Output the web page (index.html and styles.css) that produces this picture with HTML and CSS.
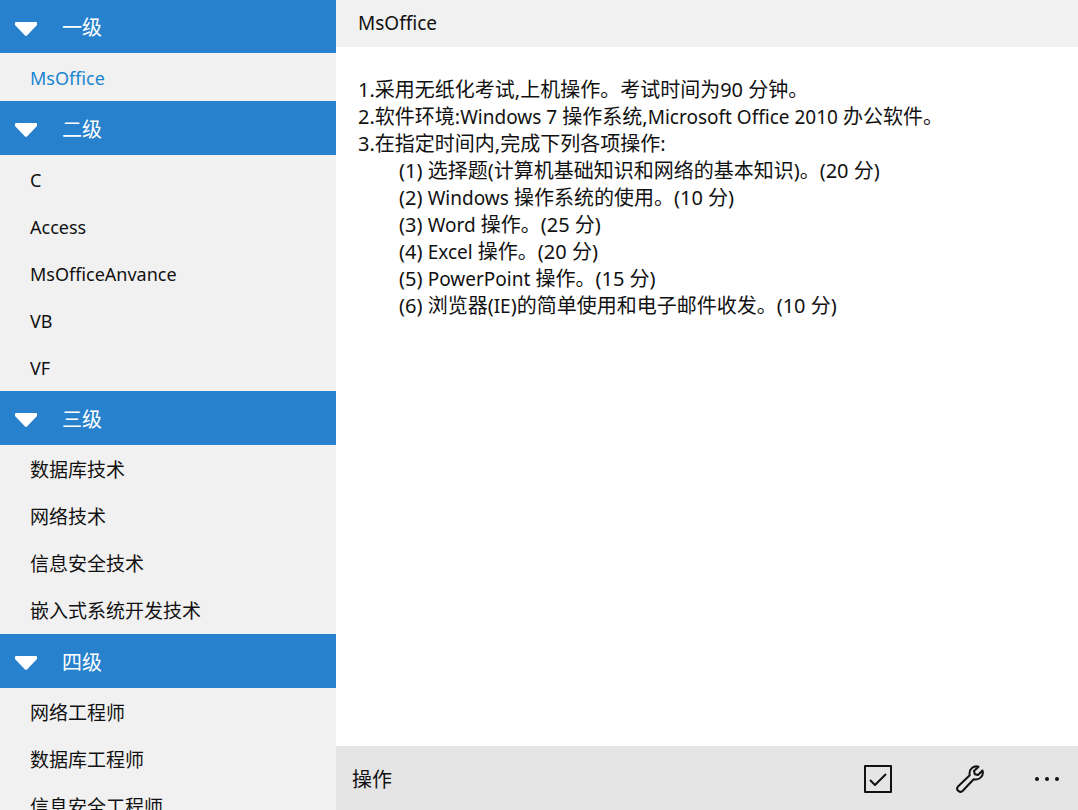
FILE: index.html
```
<!DOCTYPE html>
<html lang="zh-CN">
<head>
    <meta charset="UTF-8">
    <meta name="viewport" content="width=device-width, initial-scale=1.0">
    <title>MsOffice</title>
    <link rel="stylesheet" href="styles.css">
</head>
<body>
    <nav class="sidebar">
        <details class="level" open>
            <summary><svg class="arrow" viewBox="0 0 22 14"><path d="M1 0h20q1 0 1 1v2L12 13.500q-1 .8-2 0L0 3V1q0-1 1-1z"/></svg>一级</summary>
            <ul class="latin">
                <li><a class="active" href="#msoffice">MsOffice</a></li>
            </ul>
        </details>
        <details class="level" open>
            <summary><svg class="arrow" viewBox="0 0 22 14"><path d="M1 0h20q1 0 1 1v2L12 13.500q-1 .8-2 0L0 3V1q0-1 1-1z"/></svg>二级</summary>
            <ul class="latin">
                <li><a href="#c">C</a></li>
                <li><a href="#access">Access</a></li>
                <li><a href="#msofficeanvance">MsOfficeAnvance</a></li>
                <li><a href="#vb">VB</a></li>
                <li><a href="#vf">VF</a></li>
            </ul>
        </details>
        <details class="level" open>
            <summary><svg class="arrow" viewBox="0 0 22 14"><path d="M1 0h20q1 0 1 1v2L12 13.500q-1 .8-2 0L0 3V1q0-1 1-1z"/></svg>三级</summary>
            <ul>
                <li><a href="#database">数据库技术</a></li>
                <li><a href="#network">网络技术</a></li>
                <li><a href="#security">信息安全技术</a></li>
                <li><a href="#embedded">嵌入式系统开发技术</a></li>
            </ul>
        </details>
        <details class="level" open>
            <summary><svg class="arrow" viewBox="0 0 22 14"><path d="M1 0h20q1 0 1 1v2L12 13.500q-1 .8-2 0L0 3V1q0-1 1-1z"/></svg>四级</summary>
            <ul>
                <li><a href="#network-engineer">网络工程师</a></li>
                <li><a href="#database-engineer">数据库工程师</a></li>
                <li><a href="#security-engineer">信息安全工程师</a></li>
            </ul>
        </details>
    </nav>

    <main class="detail">
        <h1>MsOffice</h1>
        <div class="content">
            <p>1.采用无纸化考试,上机操作。考试时间为90 分钟。</p>
            <p>2.软件环境:<span class="en">Windows 7</span> 操作系统,<span class="en">Microsoft Office 2010</span> 办公软件。</p>
            <p>3.在指定时间内,完成下列各项操作:</p>
            <p class="indent">(1) 选择题(计算机基础知识和网络的基本知识)。(20 分)</p>
            <p class="indent">(2) <span class="en">Windows</span> 操作系统的使用。(10 分)</p>
            <p class="indent">(3) <span class="en">Word</span> 操作。(25 分)</p>
            <p class="indent">(4) <span class="en">Excel</span> 操作。(20 分)</p>
            <p class="indent">(5) <span class="en">PowerPoint</span> 操作。(15 分)</p>
            <p class="indent">(6) 浏览器(<span class="en">IE</span>)的简单使用和电子邮件收发。(10 分)</p>
        </div>
        <footer class="commands">
            <span class="commands-title">操作</span>
            <button type="button" aria-label="选择">
                <svg viewBox="0 0 28 28"><path d="M1 1h26v26H1zM6 15l5 5L22 9"/></svg>
            </button>
            <button type="button" aria-label="设置">
                <svg viewBox="0 0 28 28"><path d="M22.500 1.800C18 .2 12.500 4 13.700 10.300L2 21.500c-2.600 3 1.500 7 4.500 4.500L17.700 14.300c5.500 1.400 10.500-3.500 8.800-8.800L22 10l-3.200-.8L18 6z"/></svg>
            </button>
            <button type="button" class="more" aria-label="更多">
                <svg class="dots" viewBox="0 0 28 28"><circle cx="4" cy="14" r="2"/><circle cx="14" cy="14" r="2"/><circle cx="24" cy="14" r="2"/></svg>
            </button>
        </footer>
    </main>
</body>
</html>
```

FILE: styles.css
```
* {
    box-sizing: border-box;
}
body {
    margin: 0;
    display: flex;
    height: 100vh;
    overflow: hidden;
    font-family: "Noto Sans", "Noto Sans CJK SC", sans-serif;
    font-size: 20px;
    color: #111;
    background-color: #fff;
}
.sidebar {
    flex: none;
    width: 336px;
    overflow: hidden;
    background-color: #f1f1f1;
}
.level summary {
    display: flex;
    align-items: center;
    height: 54px;
    padding-left: 15px;
    background-color: #2781cd;
    color: #fff;
    list-style: none;
    cursor: pointer;
}
.level:first-child summary {
    height: 53px;
}
.arrow {
    width: 22px;
    height: 14px;
    margin-top: 4px;
    margin-right: 25px;
    fill: #fff;
}
.level ul {
    margin: 0;
    padding: 0 0 1px;
    list-style: none;
}
.level a {
    display: block;
    padding: 4px 0 0 30px;
    font-size: 19px;
    line-height: 43px;
    color: #111;
    text-decoration: none;
}
.level .latin a {
    font-size: 18px;
}
.level a.active {
    color: #1a86d0;
}
.detail {
    flex: 1;
    display: flex;
    flex-direction: column;
    min-width: 0;
}
.detail h1 {
    margin: 0;
    padding-left: 22px;
    background-color: #f1f1f1;
    font-size: 19px;
    font-weight: normal;
    line-height: 47px;
}
.content {
    flex: 1;
    padding: 29px 22px;
}
.content p {
    margin: 0;
    line-height: 27px;
}
.content .indent {
    padding-left: 41px;
}
.en {
    font-size: 19px;
    line-height: 1;
}
.commands {
    display: flex;
    align-items: center;
    height: 64px;
    padding-left: 16px;
    background-color: #e5e5e5;
}
.commands-title {
    flex: 1;
}
.commands button {
    width: 92px;
    height: 64px;
    padding: 2px 0 0;
    border: 0;
    background: none;
}
.commands .more {
    width: 62px;
}
.commands svg {
    width: 28px;
    height: 28px;
    vertical-align: middle;
    fill: none;
    stroke: #111;
    stroke-width: 2;
    stroke-linejoin: round;
}
.commands .dots {
    fill: #111;
    stroke: none;
}
```
